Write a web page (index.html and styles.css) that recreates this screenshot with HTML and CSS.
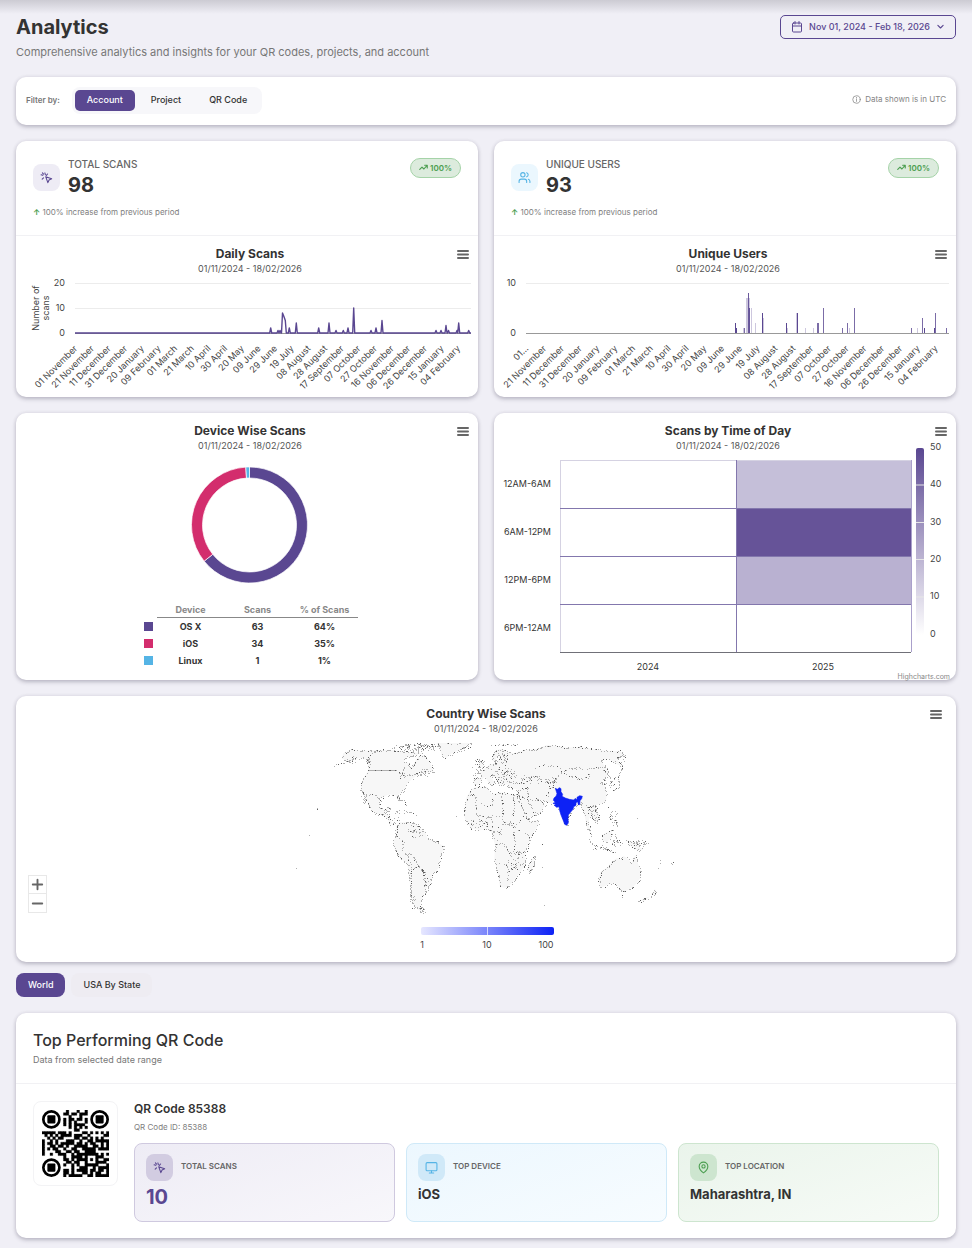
FILE: index.html
```html
<!DOCTYPE html>
<html lang="en">
<head>
<meta charset="utf-8">
<meta name="viewport" content="width=device-width, initial-scale=1">
<title>Analytics</title>
<link rel="stylesheet" href="styles.css">
</head>
<body>
<svg class="defs" aria-hidden="true">
  <symbol id="i-click" viewBox="0 0 24 24"><path d="M9 3.5 10 7M5.2 8 2 7M6.5 12.5 4 15M14 5.5 11.8 8.2M4.5 3.5l2 2.3M10.5 10.5l11 4-4.8 2.2-2.2 4.8z"/></symbol>
  <symbol id="i-users" viewBox="0 0 24 24"><circle cx="9" cy="7" r="4"/><path d="M2 21v-2a4 4 0 0 1 4-4h6a4 4 0 0 1 4 4v2M16 3.2a4 4 0 0 1 0 7.6M22 21v-2a4 4 0 0 0-3-3.9"/></symbol>
  <symbol id="i-trend" viewBox="0 0 24 24"><path d="m2 17 6-6 5 5 8-9M15 6h7v7"/></symbol>
  <symbol id="i-calendar" viewBox="0 0 24 24"><rect x="3" y="4" width="18" height="18" rx="2"/><path d="M3 10h18M8 1v5M16 1v5"/></symbol>
  <symbol id="i-chevron" viewBox="0 0 24 24"><path d="m5 9 7 7 7-7"/></symbol>
  <symbol id="i-info" viewBox="0 0 24 24"><circle cx="12" cy="12" r="10"/><path d="M12 11v6M12 6.5v1.5"/></symbol>
  <symbol id="i-monitor" viewBox="0 0 24 24"><rect x="2" y="3" width="20" height="15" rx="2"/><path d="M8 22h8M12 18v4"/></symbol>
  <symbol id="i-pin" viewBox="0 0 24 24"><path d="M20 10c0 6-8 12-8 12S4 16 4 10a8 8 0 0 1 16 0z"/><circle cx="12" cy="10" r="3"/></symbol>
  <symbol id="i-menu" viewBox="0 0 12 9"><path d="M1 1h10M1 4.5h10M1 8h10"/></symbol>
</svg>

<main class="page">
  <header class="page-head">
    <div>
      <h1>Analytics</h1>
      <p class="lead">Comprehensive analytics and insights for your QR codes, projects, and account</p>
    </div>
    <button class="date-btn" type="button">
      <svg class="icon icon-md"><use href="#i-calendar"/></svg>
      Nov 01, 2024 - Feb 18, 2026
      <svg class="icon icon-sm"><use href="#i-chevron"/></svg>
    </button>
  </header>

  <section class="card filter">
    <span class="filter-label">Filter by:</span>
    <div class="segmented">
      <button type="button" class="seg active">Account</button>
      <button type="button" class="seg">Project</button>
      <button type="button" class="seg">QR Code</button>
    </div>
    <span class="utc"><svg class="icon icon-sm"><use href="#i-info"/></svg>Data shown is in UTC</span>
  </section>

  <div class="grid">
    <section class="card">
      <div class="stat">
        <div class="stat-row">
          <span class="tile-icon purple"><svg class="icon"><use href="#i-click"/></svg></span>
          <div class="stat-text"><span class="stat-name">TOTAL SCANS</span><strong class="stat-value">98</strong></div>
          <span class="badge"><svg class="icon icon-sm"><use href="#i-trend"/></svg>100%</span>
        </div>
        <p class="change"><b>↑</b> 100% increase from previous period</p>
      </div>
      <div class="chart">
        <h3>Daily Scans</h3><p class="range">01/11/2024 - 18/02/2026</p>
        <button class="menu" type="button" aria-label="Daily Scans chart menu"><svg><use href="#i-menu"/></svg></button>
        <svg class="plot" id="daily" viewBox="0 0 462 122"></svg>
      </div>
    </section>

    <section class="card">
      <div class="stat">
        <div class="stat-row">
          <span class="tile-icon blue"><svg class="icon"><use href="#i-users"/></svg></span>
          <div class="stat-text"><span class="stat-name">UNIQUE USERS</span><strong class="stat-value">93</strong></div>
          <span class="badge"><svg class="icon icon-sm"><use href="#i-trend"/></svg>100%</span>
        </div>
        <p class="change"><b>↑</b> 100% increase from previous period</p>
      </div>
      <div class="chart">
        <h3>Unique Users</h3><p class="range">01/11/2024 - 18/02/2026</p>
        <button class="menu" type="button" aria-label="Unique Users chart menu"><svg><use href="#i-menu"/></svg></button>
        <svg class="plot" id="unique" viewBox="0 0 462 122"></svg>
      </div>
    </section>

    <section class="card">
      <div class="chart">
        <h3>Device Wise Scans</h3><p class="range">01/11/2024 - 18/02/2026</p>
        <button class="menu" type="button" aria-label="Device Wise Scans chart menu"><svg><use href="#i-menu"/></svg></button>
        <svg class="plot" id="donut" viewBox="0 0 462 150"></svg>
        <table class="devices">
          <thead><tr><td></td><th>Device</th><th>Scans</th><th>% of Scans</th></tr></thead>
          <tbody>
            <tr><td><i class="swatch osx"></i></td><td>OS X</td><td>63</td><td>64%</td></tr>
            <tr><td><i class="swatch ios"></i></td><td>iOS</td><td>34</td><td>35%</td></tr>
            <tr><td><i class="swatch linux"></i></td><td>Linux</td><td>1</td><td>1%</td></tr>
          </tbody>
        </table>
      </div>
    </section>

    <section class="card">
      <div class="chart">
        <h3>Scans by Time of Day</h3><p class="range">01/11/2024 - 18/02/2026</p>
        <button class="menu" type="button" aria-label="Scans by Time of Day chart menu"><svg><use href="#i-menu"/></svg></button>
        <svg class="plot" viewBox="0 0 462 228">
          <defs><linearGradient id="heat" x1="0" y1="0" x2="0" y2="1"><stop offset="0" stop-color="#5a4791"/><stop offset="1" stop-color="#fff"/></linearGradient></defs>
          <g class="crisp">
            <rect x="242" y="8" width="175" height="48" fill="#c5bfd9"/>
            <rect x="242" y="56" width="175" height="48" fill="#665398"/>
            <rect x="242" y="104" width="175" height="48" fill="#b9b1d1"/>
            <path d="M66 8h351M66 8v192" stroke="#d5d2e2"/>
            <path d="M66 56h351M66 104h351M66 152h351M242 8v192" stroke="#8377ad"/>
            <path d="M417 8v192" stroke="#aaa0cb"/>
            <path d="M66 200.5h351" stroke="#707078"/>
          </g>
          <g class="dark end"><text x="57" y="35">12AM-6AM</text><text x="57" y="83">6AM-12PM</text><text x="57" y="131">12PM-6PM</text><text x="57" y="179">6PM-12AM</text></g>
          <g class="dark mid"><text x="154" y="218">2024</text><text x="329" y="218">2025</text></g>
          <rect x="422" y="-4" width="8" height="187" rx="2" fill="url(#heat)"/>
          <path d="M422 33h8M422 70.500h8M422 107.500h8M422 145h8" stroke="#e6e6e6"/>
          <g><text x="436" y="-2">50</text><text x="436" y="35">40</text><text x="436" y="73">30</text><text x="436" y="110">20</text><text x="436" y="147">10</text><text x="436" y="185">0</text></g>
          <text class="credit" x="456" y="227">Highcharts.com</text>
        </svg>
      </div>
    </section>
  </div>

  <section class="card map-card">
    <div class="chart wide">
      <h3>Country Wise Scans</h3><p class="range">01/11/2024 - 18/02/2026</p>
      <button class="menu" type="button" aria-label="Country Wise Scans chart menu"><svg><use href="#i-menu"/></svg></button>
      <svg class="plot" id="map" viewBox="0 0 940 227"></svg>
      <div class="zoom"><button type="button" aria-label="Zoom in"><svg viewBox="0 0 18 18"><path d="M4 9h10M9 4v10"/></svg></button><button type="button" aria-label="Zoom out"><svg viewBox="0 0 18 18"><path d="M4 9h10"/></svg></button></div>
    </div>
  </section>

  <div class="tabs">
    <button type="button" class="tab active">World</button>
    <button type="button" class="tab">USA By State</button>
  </div>

  <section class="card top-code">
    <header class="top-head">
      <h2>Top Performing QR Code</h2>
      <p>Data from selected date range</p>
    </header>
    <div class="top-body">
      <div class="qr-frame"><svg id="qr" viewBox="0 0 25 25" role="img" aria-label="QR Code 85388"></svg></div>
      <div class="top-info">
        <h4>QR Code 85388</h4>
        <p class="code-id">QR Code ID: 85388</p>
        <div class="tiles">
          <div class="tile t-purple"><div class="tile-head"><span class="tile-icon"><svg class="icon"><use href="#i-click"/></svg></span><span class="tile-label">TOTAL SCANS</span></div><strong class="tile-number">10</strong></div>
          <div class="tile t-blue"><div class="tile-head"><span class="tile-icon"><svg class="icon"><use href="#i-monitor"/></svg></span><span class="tile-label">TOP DEVICE</span></div><strong>iOS</strong></div>
          <div class="tile t-green"><div class="tile-head"><span class="tile-icon"><svg class="icon"><use href="#i-pin"/></svg></span><span class="tile-label">TOP LOCATION</span></div><strong>Maharashtra, IN</strong></div>
        </div>
      </div>
    </div>
  </section>
</main>
<script src="charts.js"></script>
</body>
</html>
```

FILE: styles.css
```css
* { box-sizing: border-box; }
body {
  margin: 0;
  background: #f0eff6;
  color: #333;
  font-family: Inter, "Liberation Sans", sans-serif;
  font-size: 9px;
}
body::before {
  content: "";
  position: absolute;
  inset: 0 0 auto 0;
  height: 14px;
  background: linear-gradient(rgba(60, 60, 70, .2), rgba(60, 60, 70, 0));
}
h1, h2, h3, h4, p { margin: 0; }
button { font: inherit; color: inherit; border: 0; background: none; padding: 0; cursor: pointer; }
.defs { position: absolute; width: 0; height: 0; }
.icon { width: 13px; height: 13px; fill: none; stroke: currentColor; stroke-width: 2; stroke-linecap: round; stroke-linejoin: round; flex: none; }
.icon-md { width: 12px; height: 12px; }
.icon-sm { width: 9px; height: 9px; }
.date-btn .icon-sm, .badge .icon-sm { stroke-width: 3; }

.page { padding: 15px 16px 9px; }
.page-head { display: flex; justify-content: space-between; align-items: flex-start; }
h1 { font-size: 20px; line-height: 24px; font-weight: 700; }
.lead { font-size: 11px; line-height: 16px; margin: 5px 0 17px; color: #777; }
.date-btn { display: flex; align-items: center; gap: 6px; height: 24px; padding: 0 10px 1px; border: 1px solid #5a4791; border-radius: 5px; color: #5a4791; font-weight: 500; }

.card { background: #fff; border-radius: 10px; box-shadow: 0 2px 4px rgba(40, 35, 60, .26), 0 0 4px rgba(40, 35, 60, .07); }
.filter { display: flex; align-items: center; height: 48px; padding: 0 10px 2px; }
.filter-label { font-size: 8px; font-weight: 600; color: #777; margin-right: 12px; }
.segmented { display: flex; gap: 4px; padding: 3px; border-radius: 8px; background: #f7f7fa; }
.seg { height: 21px; padding: 0 12px 1px; border-radius: 5px; font-weight: 500; }
.active { background: #5a4791; color: #fff; }
.utc { display: flex; align-items: center; gap: 4px; margin-left: auto; padding-bottom: 2px; font-size: 8px; color: #858585; }

.grid { display: grid; grid-template-columns: 1fr 1fr; gap: 16px; margin: 16px 0; }
.stat { padding: 17px 17px 18px; border-bottom: 1px solid #f1f1f4; }
.stat-row { display: flex; align-items: flex-start; gap: 8px; }
.tile-icon { display: flex; align-items: center; justify-content: center; width: 27px; height: 27px; border-radius: 8px; flex: none; }
.stat-row .tile-icon { margin-top: 6px; }
.purple { background: #eeecf5; color: #5a4791; }
.blue { background: #ebf7fe; color: #55b4e5; }
.stat-text { display: flex; flex-direction: column; flex: 1; }
.stat-name { font-size: 10px; line-height: 12px; font-weight: 500; color: #666; }
.stat-value { font-size: 20px; line-height: 24px; margin-top: 3px; }
.badge { display: flex; align-items: center; gap: 2px; height: 20px; padding: 0 8px 1px; border: 1px solid #a5d3a8; border-radius: 10px; background: #dcebdd; color: #4b9e50; font-size: 8px; font-weight: 600; }
.change { font-size: 8px; line-height: 10px; margin-top: 10px; color: #808080; }
.change b { color: #4b9e50; }

.chart { position: relative; padding-top: 9px; }
.chart h3, .range { padding-left: 6px; text-align: center; }
.wide h3, .wide .range { padding-left: 0; }
.chart h3 { font-size: 12px; line-height: 18px; font-weight: 700; }
.range { line-height: 12px; color: #555; }
.menu { position: absolute; top: 14px; right: 9px; width: 12px; height: 9px; }
.wide .menu { right: 14px; }
.menu svg { display: block; width: 12px; height: 9px; fill: none; stroke: #666; stroke-width: 2; stroke-linecap: round; }
.plot { display: block; width: 100%; overflow: visible; font-size: 9px; fill: #333; }
.plot text { fill: #444; }
.plot .dark text { fill: #333; }
.plot .end text, .plot text.end { text-anchor: end; }
.plot .mid text { text-anchor: middle; }
.plot text.credit { font-size: 7px; fill: #888; text-anchor: end; }
.crisp { shape-rendering: crispEdges; }
.land { fill: #f7f7f7; }
.hot { fill: #0d22f5; }

.devices { width: 214px; margin: 0 auto; position: relative; left: 4px; table-layout: fixed; border-spacing: 0; padding-bottom: 10px; font-weight: 700; text-align: center; }
.devices th, .devices td { padding: 0; height: 17px; }
.devices thead th, .devices thead td { height: 16px; }
.devices th { color: #888; border-bottom: 1px solid #888; }
.devices td:first-child { width: 13px; text-align: left; }
.swatch { display: block; width: 9px; height: 9px; }
.osx { background: #5a4791; }
.ios { background: #d32d6d; }
.linux { background: #55b4e5; }

.zoom { position: absolute; left: 12px; bottom: 49px; display: flex; flex-direction: column; }
.zoom button { width: 19px; height: 19px; border: 1px solid #e8e8e8; background: #fff; }
.zoom button + button { border-top: 0; }
.zoom svg { display: block; width: 17px; height: 17px; stroke: #666; stroke-width: 2; stroke-linecap: round; }

.tabs { display: flex; gap: 6px; margin: 11px 0 16px; }
.tab { height: 24px; padding: 0 12px 2px; border-radius: 8px; font-weight: 500; }
.tab:not(.active) { background: #eeecf2; }

.top-head { padding: 17px 17px 17px; border-bottom: 1px solid #f1f1f4; }
h2 { font-size: 16px; line-height: 20px; font-weight: 500; }
.top-head p { line-height: 12px; margin-top: 4px; color: #777; }
.top-body { display: flex; align-items: flex-start; gap: 16px; padding: 17px 17px 16px; }
.qr-frame { width: 85px; padding: 8px; border: 1px solid #f3f3f5; border-radius: 8px; flex: none; }
.qr-frame svg { display: block; width: 100%; }
.top-info { flex: 1; }
h4 { font-size: 12px; line-height: 16px; font-weight: 600; }
.code-id { font-size: 8px; line-height: 12px; margin: 4px 0 10px; color: #808080; }
.tiles { display: grid; grid-template-columns: repeat(3, 1fr); gap: 11px; }
.tile { height: 79px; padding: 10px 11px; border: 1px solid; border-radius: 8px; }
.tile-head { display: flex; align-items: center; gap: 8px; font-size: 8px; font-weight: 600; color: #666; }
.tile-label { padding-bottom: 3px; }
.tile strong { display: block; font-size: 13px; line-height: 18px; margin-top: 4px; }
.tile .tile-number { font-size: 20px; line-height: 24px; color: #5a4791; }
.t-purple { background: linear-gradient(160deg, #eeecf5, #f8f7fb); border-color: #cfc9df; }
.t-purple .tile-icon { background: #d2cce1; color: #5a4791; }
.t-blue { background: linear-gradient(160deg, #ecf7fe, #f7fcff); border-color: #cfe9f8; }
.t-blue .tile-icon { background: #d0e9f8; color: #55b4e5; }
.t-green { background: linear-gradient(160deg, #eaf4eb, #f7fbf7); border-color: #cde5cf; }
.t-green .tile-icon { background: #cde5cf; color: #4b9e50; }
```

FILE: charts.js
```js
const NS = 'http://www.w3.org/2000/svg';
function add(parent, tag, attrs, text) {
  const el = document.createElementNS(NS, tag);
  for (const k in attrs) el.setAttribute(k, attrs[k]);
  if (text !== undefined) el.textContent = text;
  parent.appendChild(el);
  return el;
}

const dates = ['01 November', '21 November', '11 December', '31 December', '20 January', '09 February',
  '01 March', '21 March', '10 April', '30 April', '20 May', '09 June', '29 June', '19 July', '08 August',
  '28 August', '17 September', '07 October', '27 October', '16 November', '06 December', '26 December',
  '15 January', '04 February'];

function axis(svg, left, labels, first, step) {
  labels.forEach(([value, y]) => {
    add(svg, 'path', { d: `M${left} ${y}H455`, stroke: value ? '#ececec' : '#999', class: 'crisp' });
    add(svg, 'text', { x: left - 10, y: y + 3, class: 'end' }, value);
  });
  dates.forEach((d, i) => {
    const x = first + step * i;
    add(svg, 'text', { x, y: 74, class: 'end', transform: `rotate(-45 ${x} 74)` }, step > 17 && !i ? '01…' : d);
  });
}

// Daily scans: [x position, scans]
const daily = document.getElementById('daily');
axis(daily, 59, [[20, 8], [10, 33], [0, 58]], 62, 16.65);
const peaks = [[254.7, 2], [262, 1], [264, 1], [266.5, 8], [268, 6.5], [269.3, 5], [273.3, 2], [280.3, 4], [302.7, 2],
  [313, 4], [320, 1], [327.3, 1], [332, 2], [337.7, 10], [355, 1], [360, 2], [366, 5], [420, 1], [425, 1],
  [430, 3], [432.5, 1], [441, 1], [442.7, 4], [452.7, 1]];
let line = 'M59 58';
peaks.forEach(([x, v], i) => {
  const prev = peaks[i - 1], next = peaks[i + 1];
  if (!prev || x - prev[0] > 1.6) line += `L${x - 1} 58`;
  line += `L${x} ${58 - v * 2.5}`;
  if (!next || next[0] - x > 1.6) line += `L${x + 1} 58`;
});
add(daily, 'path', { d: line + 'L455 58', fill: 'none', stroke: '#5a4791', 'stroke-width': 1.4, 'stroke-linejoin': 'round' });
const yTitle = add(daily, 'g', { transform: 'translate(23 33) rotate(-90)', class: 'mid' });
add(yTitle, 'text', { x: 0, y: 0 }, 'Number of');
add(yTitle, 'text', { x: 0, y: 10 }, 'scans');

// Unique users: [x position, users, opacity]
const unique = document.getElementById('unique');
axis(unique, 32, [[10, 8], [0, 58]], 35, 17.8);
[[241, 2, 1], [242, 1, 1], [249, 1, .3], [250, 1, .8], [252, 7, .3], [253, 7, .3], [254, 8, .9], [255, 7, .3],
  [255, 5, .9], [257, 5, .3], [261, 2, .3], [268, 4, 1], [269, 3, .3], [292, 2, 1], [293, 1, .3], [303, 4, 1],
  [302, 4, .3], [311, 1, .3], [319, 1, .3], [323, 2, .8], [324, 2, .8], [329, 5, .8], [348, 1, .8], [353, 2, .8],
  [355, 1, .3], [360, 5, .8], [417, 1, .8], [423, 1, .3], [428, 3, .8], [430, 1, 1], [440, 1, 1], [441, 4, .8],
  [452, 1, .8]].forEach(([x, v, o]) =>
  add(unique, 'rect', { x, y: 58 - v * 5, width: 1, height: v * 5, fill: '#5a4791', opacity: o, class: 'crisp' }));

// Device donut
const donut = document.getElementById('donut');
const C = [233.5, 73], R = 58, r = 47;
let a0 = 0;
[[63, '#5a4791'], [34, '#d32d6d'], [1, '#55b4e5']].forEach(([n, fill]) => {
  const a1 = a0 + n / 98 * 2 * Math.PI;
  const p = (rad, a) => `${C[0] + rad * Math.sin(a)} ${C[1] - rad * Math.cos(a)}`;
  const big = a1 - a0 > Math.PI ? 1 : 0;
  add(donut, 'path', { d: `M${p(R, a0)}A${R} ${R} 0 ${big} 1 ${p(R, a1)}L${p(r, a1)}A${r} ${r} 0 ${big} 0 ${p(r, a0)}Z`, fill, stroke: '#fff', 'stroke-width': .7 });
  a0 = a1;
});

// World map. Coordinates are thirds of a pixel; the second list is shifted east by 570.
const map = document.getElementById('map');
let seed = 7;
const rnd = () => (seed = (seed * 16807) % 2147483647) / 2147483647;
const parse = s => s.split(' ').map(p => p.split(',').map(Number));
const west = [
  '155,70 160,55 185,43 215,47 260,46 300,45 330,48 370,52 400,55 365,62 345,68 342,80 355,85 362,100 372,85 385,65 400,60 415,75 425,95 430,110 400,115 385,118 365,133 352,145 345,160 330,175 325,180 330,200 323,196 318,182 300,178 280,185 270,190 268,205 270,220 285,225 292,218 300,215 298,225 285,232 300,245 303,258 310,272 300,265 290,248 275,240 255,235 242,222 235,205 225,190 222,180 213,165 214,145 222,125 235,108 232,75 215,68 195,72 175,80',
  '318,275 330,262 350,262 375,263 385,275 405,290 412,310 440,320 458,332 461,342 450,365 446,400 425,420 424,440 410,460 398,485 390,510 395,525 405,532 385,525 368,505 363,480 360,450 354,400 350,385 330,370 315,345 310,320 318,300',
  '440,24 450,40 455,60 468,70 480,58 510,45 530,30 545,24'];
const east = [
  '-40,185 -48,225 -46,250 -28,280 0,286 25,283 35,295 45,330 43,375 52,410 60,455 75,458 92,448 110,425 130,400 137,380 135,355 150,310 175,270 178,255 150,258 135,235 115,195 110,180 80,175 60,172 35,178 20,155 -10,155 -25,162',
  '150,380 165,362 160,395 148,415 143,400',
  '-18,150 -20,130 5,128 0,112 15,100 30,88 50,85 60,65 52,60 45,80 35,75 38,60 50,45 65,42 85,52 100,55 130,45 170,42 200,30 230,32 260,38 300,35 340,42 380,47 420,48 435,62 410,68 425,95 405,85 385,72 360,75 372,90 385,110 380,125 365,140 375,155 380,180 378,200 350,210 345,220 358,240 348,265 338,250 330,240 325,265 335,300 322,280 312,235 305,215 298,200 264,245 264,268 255,270 240,225 220,208 200,200 165,190 185,200 195,210 180,235 140,250 120,200 112,180 115,165 80,155 85,148 60,150 45,130 30,120 45,145 30,150 15,125 5,135 -5,150',
  '360,455 355,435 362,410 385,395 395,380 410,370 425,372 430,362 445,372 455,385 465,360 472,380 482,405 480,430 465,450 445,465 425,470 415,455 405,445 385,448 370,455',
  '365,300 385,290 397,285 392,310 380,322 368,315', '440,315 465,322 490,345 470,345 450,330',
  '525,462 530,475 515,480', '512,484 490,498 475,500 492,490', '0,75 -5,95 12,98 8,80'];
const bordersW = ['235,106 318,106 330,115 345,122 365,118 390,112', '260,46 235,65 232,75', '222,180 245,178 258,182 270,195',
  '345,262 350,280 370,290 365,305 400,300', '370,285 385,295 400,285', '318,300 340,320 335,340 350,360 362,355 375,375 390,400 405,412 400,435 425,430',
  '345,355 360,380 362,410 362,500', '362,400 385,395 400,405 405,455', '220,182 225,200 240,218', '130,93 155,85 175,78 200,65',
  '320,188 340,195 350,212', '340,225 365,232 380,245', '270,235 300,250 320,270', '310,38 350,30 400,26 430,34', '345,90 335,115'];
const bordersE = ['-30,175 -15,185 -12,240 25,245 60,240', '0,205 20,215 35,210 38,180', '65,175 68,235 70,260', '20,245 18,280', '35,245 35,285 60,290 68,260',
  '100,180 102,225 88,262 110,270', '45,330 70,325 85,350 110,355 135,350', '100,290 105,320 100,350', '55,385 80,388 85,410 80,440', '85,410 110,390 135,385', '70,260 100,275 130,290 150,310',
  '115,260 130,240', '112,180 140,190 160,230 180,235', '115,165 140,155 145,190 175,195', '130,130 150,125 175,130 210,145 200,185', '165,100 190,88 235,95 250,105 225,130 200,135',
  '240,108 265,120 300,132 325,125 328,105 300,98 265,100 240,108', '325,100 365,95 385,120', '225,130 215,155 240,165', '285,190 310,205 325,215 345,212', '325,215 335,240 350,245',
  '20,95 45,110 60,95', '60,60 65,80 85,100 70,120 110,120', '30,120 60,125 80,135', '-20,120 5,110', '85,140 120,145 135,140', '60,45 70,60 75,80', '320,300 335,325 355,335 385,345 410,352',
  '385,215 390,245 410,260 412,280', '400,165 418,155 415,125 425,95', '350,140 375,150', '400,325 415,315 430,325', '25,28 120,28', '405,300 412,325', '490,325 505,325', '422,478 428,488'];
const hot = '226,160 232,163 238,158 243,161 243,170 248,178 246,184 256,189 268,193 280,195 286,191 291,194 291,187 299,182 307,184 305,191 300,197 299,209 295,209 293,200 288,203 288,211 281,215 279,223 272,231 265,240 264,250 265,264 260,271 254,268 250,257 243,240 239,227 237,215 230,217 223,211 227,208 219,205 226,202 220,196 222,189 228,184 231,176';
let light = '', dark = '';
const dot = (x, y) => {
  if (y < 8) return;
  const d = `M${Math.round(x)} ${Math.round(y)}h1v1h-1z`;
  if (rnd() < .2) dark += d; else light += d;
};
function trace(points, close, dx) {
  const list = close ? points.concat([points[0]]) : points;
  for (let i = 1; i < list.length; i++) {
    const [x0, y0] = list[i - 1], [x1, y1] = list[i];
    const n = Math.max(1, Math.round(Math.hypot(x1 - x0, y1 - y0) / 3));
    const straight = y0 === 106 && y1 === 106;
    for (let k = 0; k < n; k++) {
      if (!straight && rnd() < .42) continue;
      const j = straight ? 0 : 1.6;
      const x = (x0 + (x1 - x0) * k / n) / 3 + dx + (rnd() - .5) * j;
      const y = (y0 + (y1 - y0) * k / n) / 3 + (rnd() - .5) * j;
      dot(x, y);
    }
  }
}
[[west, bordersW, 274], [east, bordersE, 464]].forEach(([shapes, borders, dx]) => {
  shapes.forEach(s => {
    const pts = parse(s);
    add(map, 'path', { class: 'land', d: 'M' + pts.map(p => `${p[0] / 3 + dx} ${p[1] / 3}`).join('L') + 'Z' });
    trace(pts, true, dx);
  });
  borders.forEach(s => trace(parse(s), false, dx));
});
// Island groups and dense coasts: [cx, cy, rx, ry, count]
[[398, 13, 22, 5, 75], [412, 11, 14, 4, 40], [352, 27, 2, 5, 14], [335, 24, 7, 4, 12], [385, 39, 5, 4, 12], [407, 37, 8, 4, 22], [349, 62, 5, 6, 8],
  [383, 80, 6, 6, 12], [397, 92, 8, 6, 12], [397, 165, 3, 9, 12], [405, 175, 4, 3, 12], [410, 150, 3, 8, 8], [463, 30, 7, 7, 24], [450, 14, 5, 4, 10],
  [484, 22, 8, 8, 28], [488, 40, 13, 8, 46], [515, 44, 12, 5, 26], [535, 45, 6, 4, 20], [463, 88, 9, 5, 26], [482, 100, 7, 8, 16], [500, 124, 10, 10, 30],
  [577, 78, 7, 8, 24], [598, 82, 4, 8, 18], [600, 107, 5, 4, 14], [622, 108, 8, 4, 24], [594, 46, 7, 6, 22], [604, 25, 6, 6, 14], [585, 113, 8, 3, 14],
  [645, 127, 3, 2, 2], [657, 127, 2, 2, 3], [301, 73, 1, 1, 2]].forEach(([cx, cy, rx, ry, n]) => {
  for (let i = 0; i < n; i++) {
    const a = rnd() * 6.28, q = Math.sqrt(rnd());
    dot(cx + Math.cos(a) * rx * q, cy + Math.sin(a) * ry * q);
  }
});
[[293, 100], [280, 133], [440, 81], [526, 109], [526, 132], [528, 170], [621, 83], [642, 133]].forEach(([x, y]) => dot(x, y));
add(map, 'path', { d: light, fill: '#b0b0b0', class: 'crisp' });
add(map, 'path', { d: dark, fill: '#606060', class: 'crisp' });
add(map, 'path', { class: 'hot', d: 'M' + parse(hot).map(p => `${p[0] / 3 + 464} ${p[1] / 3}`).join('L') + 'Z', stroke: '#0d22f5', 'stroke-width': .6 });
const grad = add(map, 'linearGradient', { id: 'scale' });
add(grad, 'stop', { offset: 0, 'stop-color': '#e6e7ff' });
add(grad, 'stop', { offset: 1, 'stop-color': '#0d22f5' });
add(map, 'rect', { x: 405, y: 192, width: 133, height: 8, rx: 2, fill: 'url(#scale)' });
add(map, 'path', { d: 'M471.5 192v8', stroke: '#d5d8ff' });
const ticks = add(map, 'g', { class: 'mid' });
[[406, 1], [471, 10], [530, 100]].forEach(([x, t]) => add(ticks, 'text', { x, y: 213 }, t));

// QR code modules, finder patterns drawn separately
const qr = document.getElementById('qr');
const rows = [
  '.........#...#..#........',
  '........##.##.###........',
  '..........#...#..........',
  '........#.##.##.#........',
  '........#.#.#...#........',
  '........#.#.####.........',
  '..........#.#.#.#........',
  '............##...........',
  '#####.###.#....##.#.#.#.#',
  '.#.#.#.####.###..#.....##',
  '..#.#.##....##.##.#.#.#..',
  '#..#.#...###..#..##.#####',
  '#.##.#.#####.##.#.##..#.#',
  '#..##.##.#..#####..##.#.#',
  '#.#.##..#..##..#####.####',
  '#....##..##.##..####.....',
  '#..#..###..#.########.#.#',
  '........#..####.#...###..',
  '........##.#.####.#.#..##',
  '.........##.##..#...####.',
  '........#..#.#..#####...#',
  '...........#..###..#.####',
  '........##.#.####.##.##.#',
  '........##.#...##.#.##..#',
  '........#.#####..##.#####'];
let cells = '';
rows.forEach((row, y) => [...row].forEach((c, x) => {
  if (c === '#') cells += `M${x} ${y}h1v1h-1z`;
}));
add(qr, 'path', { d: cells, stroke: '#000', 'stroke-width': .12, 'stroke-linejoin': 'round' });
[[3.5, 3.5], [21.5, 3.5], [3.5, 21.5]].forEach(([cx, cy]) => {
  add(qr, 'circle', { cx, cy, r: 3, fill: 'none', stroke: '#000' });
  add(qr, 'rect', { x: cx - 1.5, y: cy - 1.5, width: 3, height: 3, rx: .3 });
});
```
